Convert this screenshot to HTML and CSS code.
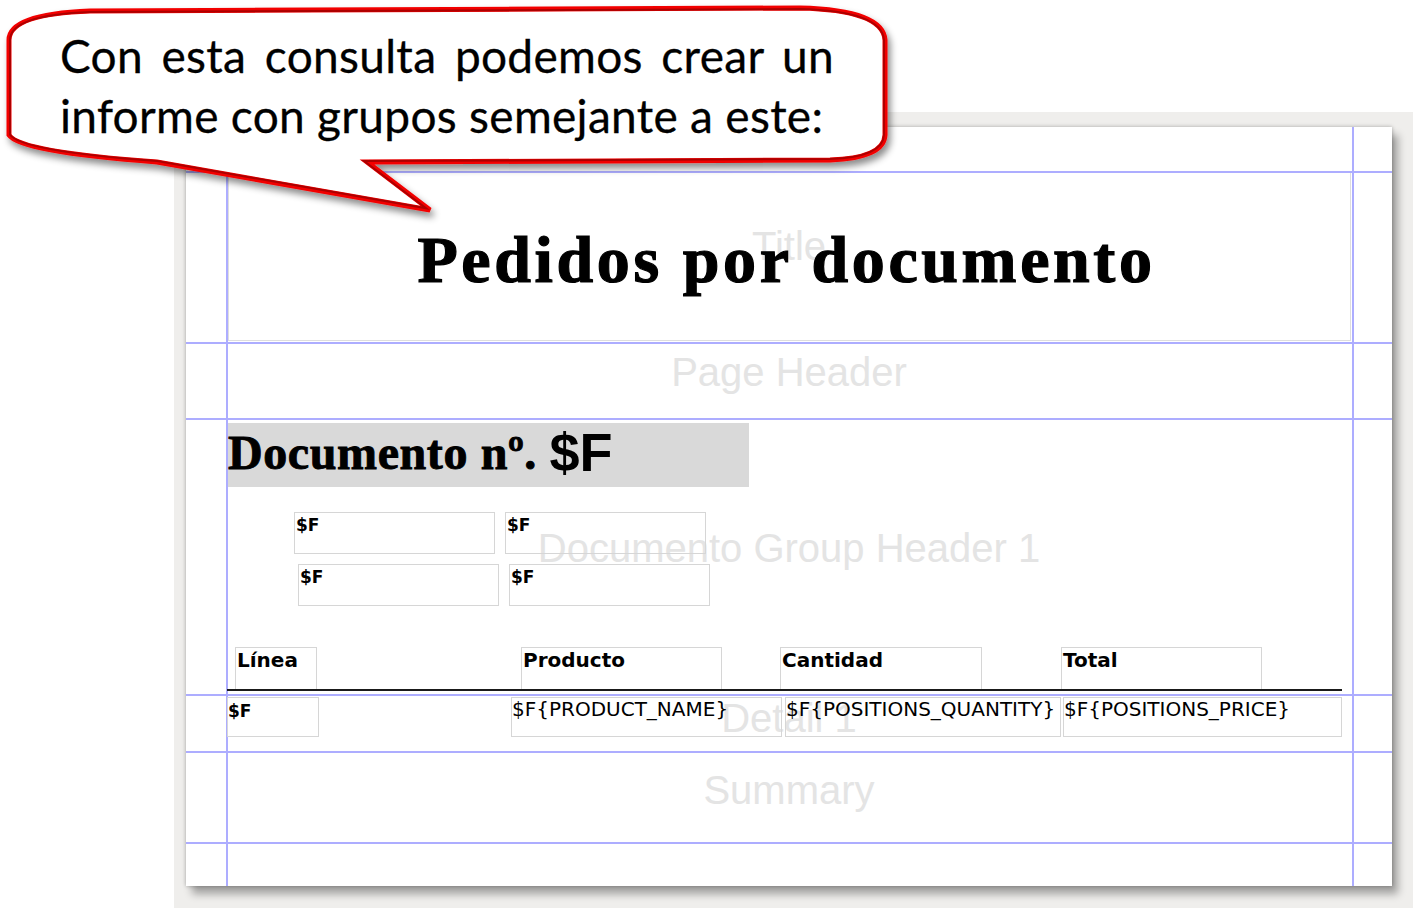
FILE: index.html
```html
<!DOCTYPE html>
<html lang="es">
<head>
<meta charset="utf-8">
<title>Pedidos por documento</title>
<link rel="stylesheet" href="styles.css">
</head>
<body>
<div class="callout">
  <svg class="callout-shape" width="900" height="225" viewBox="0 0 900 225">
    <defs>
      <filter id="bubble-shadow" x="-5%" y="-10%" width="115%" height="135%">
        <feDropShadow dx="3" dy="5" stdDeviation="3.5" flood-color="#000" flood-opacity="0.45"/>
      </filter>
      <clipPath id="bubble-inside">
        <path d="M 90 11 L 800 8 Q 883 10 885 40 L 885 135 Q 884 158 830 160 L 367 162 L 430 210 L 157 162 Q 20 152 9 135 L 9 40 Q 9 14 90 11 Z"/>
      </clipPath>
    </defs>
    <path d="M 90 11 L 800 8 Q 883 10 885 40 L 885 135 Q 884 158 830 160 L 367 162 L 430 210 L 157 162 Q 20 152 9 135 L 9 40 Q 9 14 90 11 Z" fill="#fff" stroke="#f20000" stroke-width="5" stroke-linejoin="miter" filter="url(#bubble-shadow)"/>
    <path d="M 90 11 L 800 8 Q 883 10 885 40 L 885 135 Q 884 158 830 160 L 367 162 L 430 210 L 157 162 Q 20 152 9 135 L 9 40 Q 9 14 90 11 Z" fill="none" stroke="#a00000" stroke-width="4" stroke-linejoin="miter" clip-path="url(#bubble-inside)" opacity="0.85"/>
  </svg>
  <div class="callout-text">
    <div class="callout-line1">Con esta consulta podemos crear un</div>
    <div class="callout-line2">informe con grupos semejante a este:</div>
  </div>
</div>

<div class="canvas">
  <div class="page">
    <div class="band band-top"></div>

    <div class="band band-title">
      <span class="band-label label-title">Title</span>
      <div class="title-box">
        <h1 class="report-title">Pedidos por documento</h1>
      </div>
    </div>

    <div class="band band-pageheader">
      <span class="band-label label-pageheader">Page Header</span>
    </div>

    <div class="band band-group">
      <span class="band-label label-group">Documento Group Header 1</span>
      <div class="group-banner">Documento nº. <span class="banner-field">$F</span></div>
      <div class="field-row field-row-1">
        <div class="gfield">$F</div>
        <div class="gfield">$F</div>
      </div>
      <div class="field-row field-row-2">
        <div class="gfield">$F</div>
        <div class="gfield">$F</div>
      </div>
      <div class="col-heads">
        <div class="colhead col-linea">Línea</div>
        <div class="colhead col-producto">Producto</div>
        <div class="colhead col-cantidad">Cantidad</div>
        <div class="colhead col-total">Total</div>
      </div>
      <div class="head-rule"></div>
    </div>

    <div class="band band-detail">
      <span class="band-label label-detail">Detail 1</span>
      <div class="detail-row">
        <div class="dfield d-linea">$F</div>
        <div class="dfield d-producto">$F{PRODUCT_NAME}</div>
        <div class="dfield d-cantidad">$F{POSITIONS_QUANTITY}</div>
        <div class="dfield d-total">$F{POSITIONS_PRICE}</div>
      </div>
    </div>

    <div class="band band-summary">
      <span class="band-label label-summary">Summary</span>
    </div>

    <div class="band band-bottom"></div>
  </div>
</div>
</body>
</html>
```

FILE: styles.css
```css
* { box-sizing: border-box; margin: 0; padding: 0; }

html, body {
  width: 1413px;
  height: 910px;
  overflow: hidden;
  background: #ffffff;
}

body {
  position: relative;
  font-family: "DejaVu Sans", sans-serif;
  color: #000;
}

/* ---------- speech bubble ---------- */
.callout {
  position: absolute;
  left: 0;
  top: 0;
  width: 900px;
  height: 225px;
  z-index: 10;
}

.callout-shape {
  position: absolute;
  left: 0;
  top: 0;
}

.callout-text {
  position: relative;
  width: 834px;
  padding: 26px 0 0 60px;
  font-family: Lato, "Liberation Sans", sans-serif;
  font-size: 46px;
  line-height: 60px;
  letter-spacing: 0.3px;
  color: #000;
  -webkit-text-stroke: 0.3px #000;
}

.callout-line1 {
  text-align: justify;
  text-align-last: justify;
  white-space: nowrap;
}

/* ---------- designer canvas ---------- */
.canvas {
  margin: 112px 0 0 174px;
  width: 1239px;
  height: 796px;
  padding: 15px 0 0 12px;
  background: #efeeec;
}

.page {
  width: 1206px;
  height: 759px;
  display: flex;
  flex-direction: column;
  background-color: #fff;
  background-image: linear-gradient(to right,
    transparent 40px, #adadff 40px, #adadff 42px, transparent 42px,
    transparent 1166px, #adadff 1166px, #adadff 1168px, transparent 1168px);
  box-shadow: 0 0 4px rgba(0, 0, 0, 0.3), 6px 8px 8px rgba(0, 0, 0, 0.32);
}

.band {
  position: relative;
  flex: none;
  border-bottom: 2px solid #adadff;
}

.band-top { height: 46px; }
.band-title { height: 171px; padding: 0 41px 0 42px; }
.band-pageheader { height: 76px; }
.band-group { height: 276px; }
.band-detail { height: 57px; }
.band-summary { height: 91px; }
.band-bottom { flex: 1; border-bottom: none; }

.band-label {
  position: absolute;
  inset: 0;
  display: flex;
  align-items: center;
  justify-content: center;
  font-family: "Liberation Sans", Arial, sans-serif;
  font-size: 40px;
  color: #e4e4e4;
  padding-bottom: 18px;
}

.label-title { padding-bottom: 23px; }
.label-detail { padding-bottom: 11px; }
.label-summary { padding-bottom: 15px; }

/* ---------- title ---------- */
.title-box {
  position: relative;
  height: 168px;
  border: 1px solid #dedede;
  border-top: none;
  padding-top: 49px;
  text-align: center;
}

.report-title {
  font-family: "Liberation Serif", "Times New Roman", serif;
  font-weight: bold;
  font-size: 66px;
  line-height: 76px;
  letter-spacing: 3.6px;
  color: #000;
  -webkit-text-stroke: 1.2px #000;
  padding-right: 6px;
}

/* ---------- group header ---------- */
.group-banner {
  position: relative;
  margin: 3px 0 0 42px;
  width: 521px;
  height: 64px;
  padding-bottom: 6px;
  display: flex;
  align-items: center;
  background: #d9d9d9;
  font-family: "Liberation Serif", "Times New Roman", serif;
  font-weight: bold;
  font-size: 48px;
  letter-spacing: 0.6px;
  -webkit-text-stroke: 0.9px #000;
  white-space: pre;
}

.banner-field {
  font-family: "Liberation Sans", Arial, sans-serif;
  font-weight: bold;
  font-size: 54px;
  letter-spacing: 0;
  -webkit-text-stroke: 0;
}

.field-row {
  position: relative;
  display: flex;
  gap: 10px;
}

.field-row-1 { margin: 25px 0 0 108px; }
.field-row-2 { margin: 10px 0 0 112px; }

.gfield {
  width: 201px;
  height: 42px;
  border: 1px solid #d6d6d6;
  padding: 2px 0 0 1px;
  font-weight: bold;
  font-size: 17px;
  line-height: 20px;
}

.col-heads {
  position: relative;
  display: flex;
  margin-top: 41px;
  height: 42px;
}

.colhead {
  height: 42px;
  border: 1px solid #d6d6d6;
  border-bottom: none;
  padding: 0 0 0 1px;
  font-weight: bold;
  font-size: 20px;
  line-height: 24px;
}

.col-linea { margin-left: 49px; width: 82px; }
.col-producto { margin-left: 204px; width: 201px; }
.col-cantidad { margin-left: 58px; width: 202px; }
.col-total { margin-left: 79px; width: 201px; }

.head-rule {
  position: relative;
  margin-left: 41px;
  width: 1115px;
  height: 2px;
  background: #1a1a1a;
}

/* ---------- detail ---------- */
.detail-row {
  position: relative;
  display: flex;
  margin-top: 1px;
  height: 40px;
}

.dfield {
  height: 40px;
  border: 1px solid #d6d6d6;
  font-size: 20px;
  line-height: 22px;
  white-space: nowrap;
}

.d-linea { margin-left: 41px; width: 92px; font-weight: bold; font-size: 17px; padding-top: 2px; }
.d-producto { margin-left: 192px; width: 271px; }
.d-cantidad { margin-left: 3px; width: 276px; }
.d-total { margin-left: 2px; width: 279px; }
```
